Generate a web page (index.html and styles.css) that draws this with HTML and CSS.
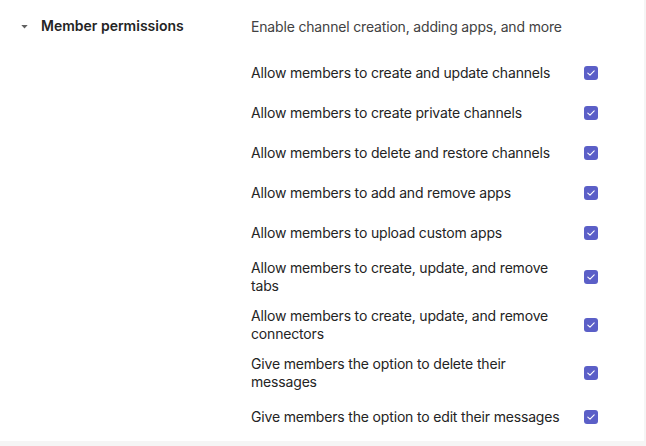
FILE: index.html
```html
<!DOCTYPE html>
<html lang="en">
<head>
<meta charset="utf-8">
<link rel="stylesheet" href="styles.css">
</head>
<body>
<div class="panel">
  <div class="left">
    <svg class="caret" width="7" height="4" viewBox="0 0 7 4"><path d="M0.3 0 H6.7 L3.5 3.6 Z" fill="#616161"/></svg>
    <span class="title">Member permissions</span>
  </div>
  <div class="right">
    <div class="desc">Enable channel creation, adding apps, and more</div>
    <div class="list">
      <div class="row"><span class="label">Allow members to create and update channels</span><span class="check"><svg width="14" height="14" viewBox="0 0 14 14"><path d="M3.8 7.2 L6 9.2 L10.2 4.9" fill="none" stroke="#fff" stroke-width="1.1" stroke-linecap="round" stroke-linejoin="round"/></svg></span></div>
      <div class="row"><span class="label">Allow members to create private channels</span><span class="check"><svg width="14" height="14" viewBox="0 0 14 14"><path d="M3.8 7.2 L6 9.2 L10.2 4.9" fill="none" stroke="#fff" stroke-width="1.1" stroke-linecap="round" stroke-linejoin="round"/></svg></span></div>
      <div class="row"><span class="label">Allow members to delete and restore channels</span><span class="check"><svg width="14" height="14" viewBox="0 0 14 14"><path d="M3.8 7.2 L6 9.2 L10.2 4.9" fill="none" stroke="#fff" stroke-width="1.1" stroke-linecap="round" stroke-linejoin="round"/></svg></span></div>
      <div class="row"><span class="label">Allow members to add and remove apps</span><span class="check"><svg width="14" height="14" viewBox="0 0 14 14"><path d="M3.8 7.2 L6 9.2 L10.2 4.9" fill="none" stroke="#fff" stroke-width="1.1" stroke-linecap="round" stroke-linejoin="round"/></svg></span></div>
      <div class="row"><span class="label">Allow members to upload custom apps</span><span class="check"><svg width="14" height="14" viewBox="0 0 14 14"><path d="M3.8 7.2 L6 9.2 L10.2 4.9" fill="none" stroke="#fff" stroke-width="1.1" stroke-linecap="round" stroke-linejoin="round"/></svg></span></div>
      <div class="row"><span class="label">Allow members to create, update, and remove tabs</span><span class="check"><svg width="14" height="14" viewBox="0 0 14 14"><path d="M3.8 7.2 L6 9.2 L10.2 4.9" fill="none" stroke="#fff" stroke-width="1.1" stroke-linecap="round" stroke-linejoin="round"/></svg></span></div>
      <div class="row"><span class="label">Allow members to create, update, and remove connectors</span><span class="check"><svg width="14" height="14" viewBox="0 0 14 14"><path d="M3.8 7.2 L6 9.2 L10.2 4.9" fill="none" stroke="#fff" stroke-width="1.1" stroke-linecap="round" stroke-linejoin="round"/></svg></span></div>
      <div class="row"><span class="label">Give members the option to delete their messages</span><span class="check"><svg width="14" height="14" viewBox="0 0 14 14"><path d="M3.8 7.2 L6 9.2 L10.2 4.9" fill="none" stroke="#fff" stroke-width="1.1" stroke-linecap="round" stroke-linejoin="round"/></svg></span></div>
      <div class="row"><span class="label">Give members the option to edit their messages</span><span class="check"><svg width="14" height="14" viewBox="0 0 14 14"><path d="M3.8 7.2 L6 9.2 L10.2 4.9" fill="none" stroke="#fff" stroke-width="1.1" stroke-linecap="round" stroke-linejoin="round"/></svg></span></div>
    </div>
  </div>
</div>
</body>
</html>
```
FILE: styles.css
```css
html, body {
  margin: 0;
  padding: 0;
  background: #f5f5f5;
}
body {
  font-family: Inter, "Noto Sans", sans-serif;
  font-size: 14px;
  color: #424242;
  width: 646px;
  height: 446px;
  overflow: hidden;
}
.panel {
  width: 644px;
  height: 441px;
  background: #ffffff;
  display: flex;
  box-sizing: border-box;
}
.left {
  width: 251px;
  flex: none;
  display: flex;
  align-items: center;
  height: 20px;
  margin-top: 16px;
  padding-left: 21px;
  box-sizing: border-box;
}
.caret {
  display: block;
  margin-right: 13px;
  margin-top: 1px;
}
.title {
  font-weight: 600;
  color: #242424;
  line-height: 20px;
}
.right {
  flex: 1;
  padding-top: 17px;
  letter-spacing: -0.17px;
}
.desc {
  line-height: 20px;
  margin-bottom: 16px;
}
.list {
  display: flex;
  flex-direction: column;
}
.row {
  display: flex;
  align-items: center;
  min-height: 40px;
  padding: 6px 0;
  box-sizing: border-box;
}
.label {
  width: 320px;
  line-height: 18px;
  color: #242424;
}
.check {
  width: 14px;
  height: 14px;
  border-radius: 3px;
  background: #5b5fc7;
  margin-left: 13px;
  display: flex;
}
.check svg {
  display: block;
}
```
